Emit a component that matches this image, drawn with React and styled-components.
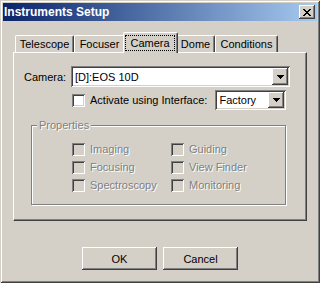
import React from "react";
import styled, { createGlobalStyle, css } from "styled-components";

const GlobalStyle = createGlobalStyle`
  html, body { margin: 0; padding: 0; background: #D4D0C8; }
  body { font-family: "Liberation Sans", Arial, sans-serif; font-size: 11px; color: #000; }
`;

const raised = css`
  box-shadow: inset -1px -1px #404040, inset 1px 1px #fff, inset -2px -2px #808080, inset 2px 2px #D4D0C8;
`;
const sunken = css`
  box-shadow: inset 1px 1px #808080, inset -1px -1px #fff, inset 2px 2px #404040, inset -2px -2px #D4D0C8;
`;

const Window = styled.div`
  box-sizing: border-box;
  width: 320px;
  height: 283px;
  padding: 3px;
  background: #D4D0C8;
  display: flex;
  flex-direction: column;
  box-shadow: inset 1px 1px #D4D0C8, inset -1px -1px #404040, inset 2px 2px #fff, inset -2px -2px #808080;
`;

const TitleBar = styled.div`
  height: 18px;
  flex: none;
  display: flex;
  align-items: center;
  justify-content: space-between;
  padding: 0 2px 0 1px;
  background: linear-gradient(to right, #0A246A, #A6CAF0);
`;

const TitleText = styled.span`
  color: #fff;
  font-weight: bold;
  font-size: 12px;
  line-height: 18px;
`;

const CloseButton = styled.div`
  width: 16px;
  height: 14px;
  background: #D4D0C8;
  display: flex;
  align-items: center;
  justify-content: center;
  ${raised}
`;

const Content = styled.div`
  padding: 11px 10px 0;
  display: flex;
  flex-direction: column;
`;

const TabRow = styled.div`
  display: flex;
  align-items: flex-end;
  height: 20px;
  padding-left: 2px;
  position: relative;
  z-index: 1;
`;

const Tab = styled.div`
  box-sizing: border-box;
  width: ${(p) => p.$width}px;
  height: 17px;
  flex: none;
  display: flex;
  align-items: center;
  justify-content: center;
  background: #D4D0C8;
  border-top: 1px solid #fff;
  border-left: 1px solid #fff;
  border-right: 1px solid #404040;
  border-radius: 2px 2px 0 0;
  box-shadow: inset -1px 0 #808080;
  ${(p) =>
    p.$active &&
    css`
      width: ${p.$width + 4}px;
      height: 21px;
      margin: 0 -2px -1px;
      position: relative;
      z-index: 2;
      align-items: stretch;
      padding: 2px 2px 2px 1px;
    `}
`;

const FocusLabel = styled.span`
  flex: 1;
  display: flex;
  align-items: center;
  justify-content: center;
  outline: 1px dotted #000;
  outline-offset: -1px;
`;

const Panel = styled.div`
  box-sizing: border-box;
  height: 169px;
  border: 1px solid;
  border-color: #fff #404040 #404040 #fff;
  box-shadow: inset -1px -1px #808080;
  padding: 13px 0 0 10px;
  display: flex;
  flex-direction: column;
`;

const FieldRow = styled.div`
  display: flex;
  align-items: center;
  height: 21px;
`;

const FieldLabel = styled.span`
  width: 47px;
  flex: none;
`;

const Combo = styled.div`
  box-sizing: border-box;
  width: ${(p) => p.$width}px;
  height: ${(p) => p.$height}px;
  padding: 2px;
  background: #fff;
  display: flex;
  ${sunken}
`;

const ComboText = styled.span`
  flex: 1;
  display: flex;
  align-items: center;
  padding-left: 2px;
`;

const DropButton = styled.div`
  width: 16px;
  flex: none;
  background: #D4D0C8;
  display: flex;
  align-items: center;
  justify-content: center;
  ${raised}
`;

const InterfaceRow = styled.div`
  display: flex;
  align-items: center;
  height: 20px;
  margin: 3px 0 0 48px;
`;

const Box = styled.span`
  box-sizing: border-box;
  width: 13px;
  height: 13px;
  flex: none;
  background: ${(p) => (p.$disabled ? "#D4D0C8" : "#fff")};
  ${sunken}
`;

const InterfaceLabel = styled.span`
  margin: 0 8px 0 5px;
`;

const GroupBox = styled.fieldset`
  box-sizing: border-box;
  width: 255px;
  margin: 9px 0 0 7px;
  padding: 0;
  border: 1px solid #808080;
  box-shadow: inset 1px 1px #fff, 1px 1px #fff;
`;

const GroupLegend = styled.legend`
  margin-left: 5px;
  padding: 0 2px;
  background: #D4D0C8;
  color: #808080;
  text-shadow: 1px 1px #fff;
`;

const CheckGrid = styled.div`
  display: grid;
  grid-template-columns: 99px 1fr;
  grid-auto-rows: 18px;
  padding: 9px 0 10px 40px;
`;

const CheckItem = styled.label`
  display: flex;
  align-items: center;
  gap: 5px;
  color: #808080;
  text-shadow: 1px 1px #fff;
`;

const ButtonRow = styled.div`
  display: flex;
  justify-content: center;
  gap: 6px;
  margin-top: 26px;
`;

const Button = styled.div`
  box-sizing: border-box;
  width: 75px;
  height: 23px;
  display: flex;
  align-items: center;
  justify-content: center;
  background: #D4D0C8;
  ${raised}
`;

const CloseGlyph = () => (
  <svg width="8" height="7" viewBox="0 0 8 7" shapeRendering="crispEdges" style={{ marginTop: 1 }}>
    <path fill="#000" d="M0 0h2v1H0zM6 0h2v1H6zM1 1h2v1H1zM5 1h2v1H5zM2 2h4v1H2zM3 3h2v1H3zM2 4h4v1H2zM1 5h2v1H1zM5 5h2v1H5zM0 6h2v1H0zM6 6h2v1H6z" />
  </svg>
);

const Arrow = () => (
  <svg width="7" height="4" viewBox="0 0 7 4" shapeRendering="crispEdges">
    <path fill="#000" d="M0 0h7v1H0zM1 1h5v1H1zM2 2h3v1H2zM3 3h1v1H3z" />
  </svg>
);

const tabs = [
  { name: "Telescope", width: 59 },
  { name: "Focuser", width: 51 },
  { name: "Camera", width: 51, active: true },
  { name: "Dome", width: 39 },
  { name: "Conditions", width: 63 },
];

const props = ["Imaging", "Guiding", "Focusing", "View Finder", "Spectroscopy", "Monitoring"];

export default function App() {
  return (
    <>
      <GlobalStyle />
      <Window>
        <TitleBar>
          <TitleText>Instruments Setup</TitleText>
          <CloseButton>
            <CloseGlyph />
          </CloseButton>
        </TitleBar>
        <Content>
          <TabRow>
            {tabs.map((t) => (
              <Tab key={t.name} $width={t.width} $active={t.active}>
                {t.active ? <FocusLabel>{t.name}</FocusLabel> : t.name}
              </Tab>
            ))}
          </TabRow>
          <Panel>
            <FieldRow>
              <FieldLabel>Camera:</FieldLabel>
              <Combo $width={219} $height={21}>
                <ComboText>[D]:EOS 10D</ComboText>
                <DropButton>
                  <Arrow />
                </DropButton>
              </Combo>
            </FieldRow>
            <InterfaceRow>
              <Box />
              <InterfaceLabel>Activate using Interface:</InterfaceLabel>
              <Combo $width={71} $height={20}>
                <ComboText>Factory</ComboText>
                <DropButton>
                  <Arrow />
                </DropButton>
              </Combo>
            </InterfaceRow>
            <GroupBox>
              <GroupLegend>Properties</GroupLegend>
              <CheckGrid>
                {props.map((p) => (
                  <CheckItem key={p}>
                    <Box $disabled />
                    {p}
                  </CheckItem>
                ))}
              </CheckGrid>
            </GroupBox>
          </Panel>
          <ButtonRow>
            <Button>OK</Button>
            <Button>Cancel</Button>
          </ButtonRow>
        </Content>
      </Window>
    </>
  );
}
